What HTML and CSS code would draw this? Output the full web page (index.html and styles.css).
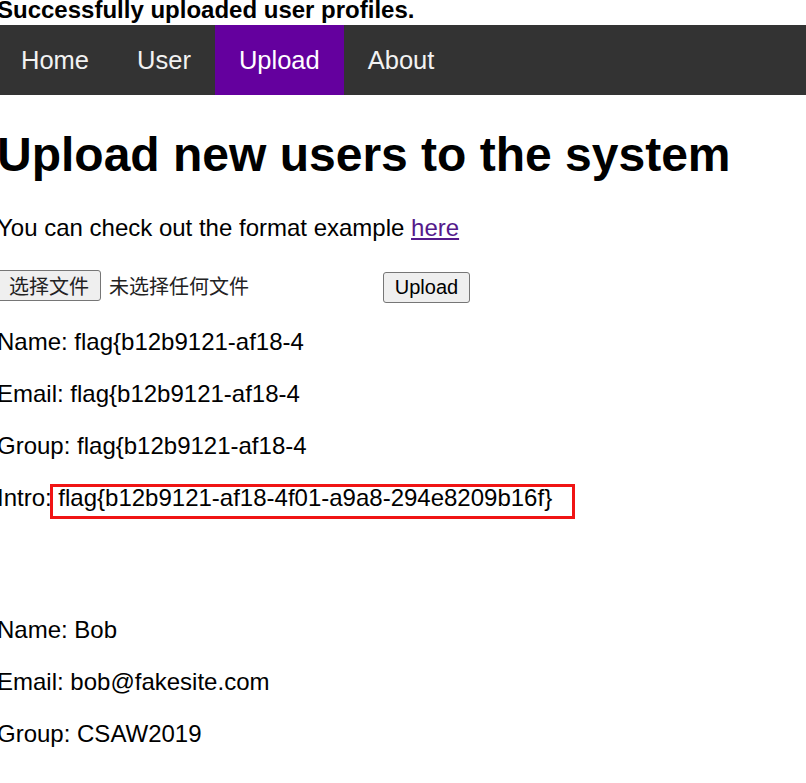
FILE: index.html
```html
<!DOCTYPE html>
<html lang="en">
<head>
<meta charset="utf-8">
<title>Upload</title>
<link rel="stylesheet" href="styles.css">
</head>
<body>
<div class="page">
  <div class="msg">Successfully uploaded user profiles.</div>
  <nav class="topnav">
    <a href="#">Home</a>
    <a href="#">User</a>
    <a href="#" class="active">Upload</a>
    <a href="#">About</a>
  </nav>
  <h1>Upload new users to the system</h1>
  <p>You can check out the format example <a class="link" href="#">here</a></p>
  <form class="upload-form">
    <div class="file">
      <span class="btn btn-file">选择文件</span>
      <span class="file-name">未选择任何文件</span>
    </div>
    <span class="btn btn-upload">Upload</span>
  </form>
  <div class="profile">
    <p>Name: flag{b12b9121-af18-4</p>
    <p>Email: flag{b12b9121-af18-4</p>
    <p>Group: flag{b12b9121-af18-4</p>
    <p>Intro: <span class="mark">flag{b12b9121-af18-4f01-a9a8-294e8209b16f}</span></p>
  </div>
  <div class="profile">
    <p>Name: Bob</p>
    <p>Email: bob@fakesite.com</p>
    <p>Group: CSAW2019</p>
  </div>
</div>
</body>
</html>
```
FILE: styles.css
```css
html, body {
  margin: 0;
  padding: 0;
  background: #fff;
}
body {
  font-family: "Liberation Sans", Arial, "Noto Sans CJK SC", sans-serif;
  color: #000;
  font-size: 24px;
  overflow: hidden;
}
.page {
  margin-left: -3px;
}
.msg {
  font-weight: bold;
  font-size: 24px;
  line-height: 20px;
  margin-bottom: 5px;
}
.topnav {
  display: flex;
  background: #333;
}
.topnav a {
  display: block;
  padding: 21px 24px;
  font-size: 25.5px;
  line-height: 28px;
  color: #f2f2f2;
  text-decoration: none;
}
.topnav a.active {
  background: #64009e;
  color: #fff;
}
h1 {
  font-size: 48px;
  font-weight: bold;
  margin: 32px 0;
}
p {
  margin: 24px 0;
  font-size: 24px;
}
.link {
  color: #551a8b;
  text-decoration: underline;
}
.upload-form {
  display: flex;
  align-items: flex-start;
  gap: 7px;
  height: 34px;
  margin: 28px 0 24px;
}
.file {
  width: 379px;
  display: flex;
  align-items: center;
  gap: 8px;
}
.btn {
  display: inline-flex;
  align-items: center;
  justify-content: center;
  box-sizing: border-box;
  height: 31px;
  padding: 0 9px;
  border: 1px solid #767676;
  border-radius: 3px;
  background: #efefef;
  font-size: 20px;
  font-family: "Liberation Sans", Arial, "Noto Sans CJK SC", sans-serif;
  color: #000;
}
.btn-file {
  width: 104px;
  color: #222;
}
.file-name {
  font-size: 20px;
  font-family: "Noto Sans CJK SC", sans-serif;
  color: #222;
}
.btn-upload {
  margin-top: 2px;
  width: 87px;
}
.profile + .profile {
  margin-top: 104px;
}
.mark {
  position: relative;
}
.mark::after {
  content: "";
  position: absolute;
  left: -8px;
  right: -23px;
  top: 0;
  bottom: -8px;
  border: 3px solid #f01414;
}
```
